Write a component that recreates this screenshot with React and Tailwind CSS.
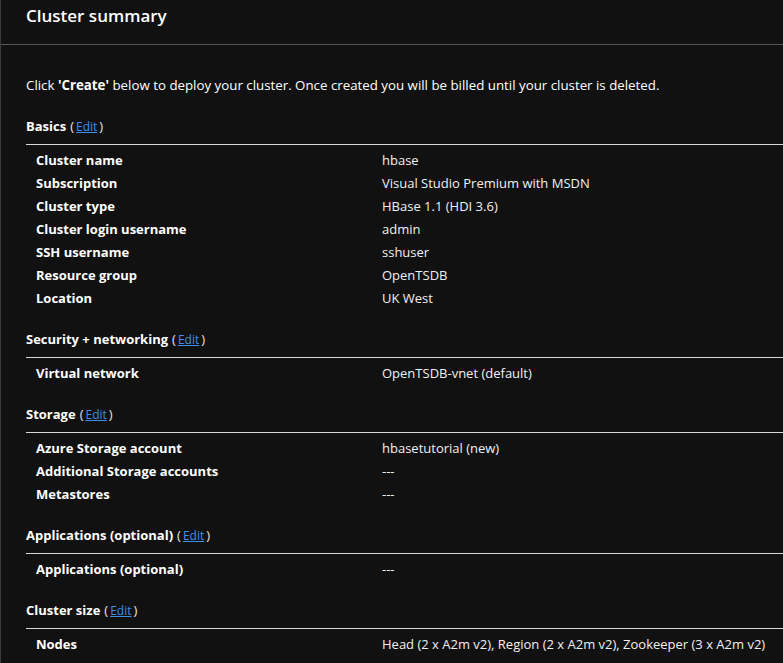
import React from "react";

const sections = [
  {
    title: "Basics",
    rows: [
      ["Cluster name", "hbase"],
      ["Subscription", "Visual Studio Premium with MSDN"],
      ["Cluster type", "HBase 1.1 (HDI 3.6)"],
      ["Cluster login username", "admin"],
      ["SSH username", "sshuser"],
      ["Resource group", "OpenTSDB"],
      ["Location", "UK West"],
    ],
  },
  {
    title: "Security + networking",
    rows: [["Virtual network", "OpenTSDB-vnet (default)"]],
  },
  {
    title: "Storage",
    rows: [
      ["Azure Storage account", "hbasetutorial (new)"],
      ["Additional Storage accounts", "---"],
      ["Metastores", "---"],
    ],
  },
  {
    title: "Applications (optional)",
    rows: [["Applications (optional)", "---"]],
  },
  {
    title: "Cluster size",
    rows: [["Nodes", "Head (2 x A2m v2), Region (2 x A2m v2), Zookeeper (3 x A2m v2)"]],
  },
];

const Section = ({ title, rows }) => {
  return (
    <div className="mb-[20px]">
      <div className="flex items-center h-[20px] font-bold text-[13px] text-white">
        <span>{title}</span>
        <span className="ml-[4px] font-normal text-[#e6e6e6]">(</span>
        <a href="#" className="mx-[2px] font-normal text-[12px] text-[#3f8fe8] underline">Edit</a>
        <span className="font-normal text-[#e6e6e6]">)</span>
      </div>
      <div className="mt-[7px] border-t border-[#d8d8d8] pt-[4px]">
        {rows.map(([label, value]) => (
          <div key={label} className="flex h-[23px] items-center text-[13px] text-white">
            <span className="w-[356px] shrink-0 pl-[10px] font-bold">{label}</span>
            <span className="text-[#f0f0f0] whitespace-nowrap">{value}</span>
          </div>
        ))}
      </div>
    </div>
  );
};

export default function App() {
  return (
    <div
      className="h-[663px] w-full overflow-hidden bg-[#111111] border-l border-[#3b3b3b]"
      style={{ fontFamily: '"Open Sans", "Noto Sans", sans-serif' }}
    >
      <div className="h-[45px] border-b border-[#555555] pl-[25px] pt-[3px]">
        <h1 className="text-[17px] leading-[26px] font-semibold text-white">Cluster summary</h1>
      </div>
      <div className="pl-[25px]">
        <p className="mt-[30px] h-[20px] leading-[20px] text-[13.3px] text-white whitespace-nowrap">
          Click <span className="font-bold">'Create'</span> below to deploy your cluster. Once created you will be billed until your cluster is deleted.
        </p>
        <div className="mt-[22px]">
          {sections.map((s) => (
            <Section key={s.title} title={s.title} rows={s.rows} />
          ))}
        </div>
      </div>
    </div>
  );
}
